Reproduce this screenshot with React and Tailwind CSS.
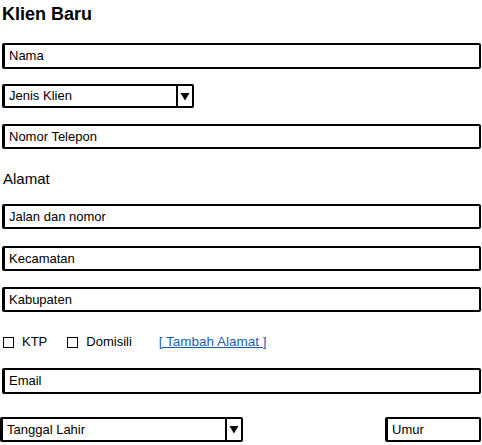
import React from "react";

const font = { fontFamily: '"Liberation Sans", Arial, sans-serif' };

function Field({ label, className = "" }) {
  return (
    <div
      className={`flex items-center border-2 border-l-[3px] border-black rounded-[2px] bg-white pl-[4px] text-[13px] text-black ${className}`}
    >
      {label}
    </div>
  );
}

function Select({ label, className = "" }) {
  return (
    <div
      className={`flex items-stretch border-2 border-l-[3px] border-black rounded-[2px] bg-white text-[13px] text-black ${className}`}
    >
      <div className="flex flex-1 items-center pl-[4px]">{label}</div>
      <div className="flex w-[16px] items-center justify-center border-l-2 border-black">
        <svg width="10" height="9" viewBox="0 0 10 9">
          <path d="M0.5 1 L9.5 1 L5 8.5 Z" fill="#000" />
        </svg>
      </div>
    </div>
  );
}

function Check({ label }) {
  return (
    <div className="flex items-center gap-[8px]">
      <div className="h-[11px] w-[11px] border border-black bg-white" />
      <span>{label}</span>
    </div>
  );
}

export default function App() {
  return (
    <div className="h-[445px] w-[482px] overflow-hidden bg-white" style={font}>
      <div className="flex flex-col pr-[1px]">
        <div className="ml-[2px] mt-[3px] h-[22px] text-[18px] font-bold leading-[22px] text-black">
          Klien Baru
        </div>
        <Field label="Nama" className="ml-[2px] mt-[18px] h-[26px]" />
        <Select label="Jenis Klien" className="ml-[2px] mt-[15px] h-[24px] w-[192px]" />
        <Field label="Nomor Telepon" className="ml-[2px] mt-[16px] h-[25px]" />
        <div className="ml-[3px] mt-[20px] h-[20px] text-[15px] leading-[20px] text-black">
          Alamat
        </div>
        <Field label="Jalan dan nomor" className="ml-[2px] mt-[15px] h-[25px]" />
        <Field label="Kecamatan" className="ml-[2px] mt-[17px] h-[25px]" />
        <Field label="Kabupaten" className="ml-[2px] mt-[16px] h-[25px]" />
        <div className="ml-[3px] mt-[22px] flex h-[16px] items-center text-[13px] text-black">
          <Check label="KTP" />
          <div className="ml-[20px]">
            <Check label="Domisili" />
          </div>
          <a className="ml-[27px] text-[13.5px] text-[#1a5fb4] underline">[ Tambah Alamat ]</a>
        </div>
        <Field label="Email" className="ml-[2px] mt-[18px] h-[26px]" />
        <div className="mt-[23px] flex items-center justify-between">
          <Select label="Tanggal Lahir" className="h-[25px] w-[243px]" />
          <Field label="Umur" className="h-[25px] w-[96px]" />
        </div>
      </div>
    </div>
  );
}
